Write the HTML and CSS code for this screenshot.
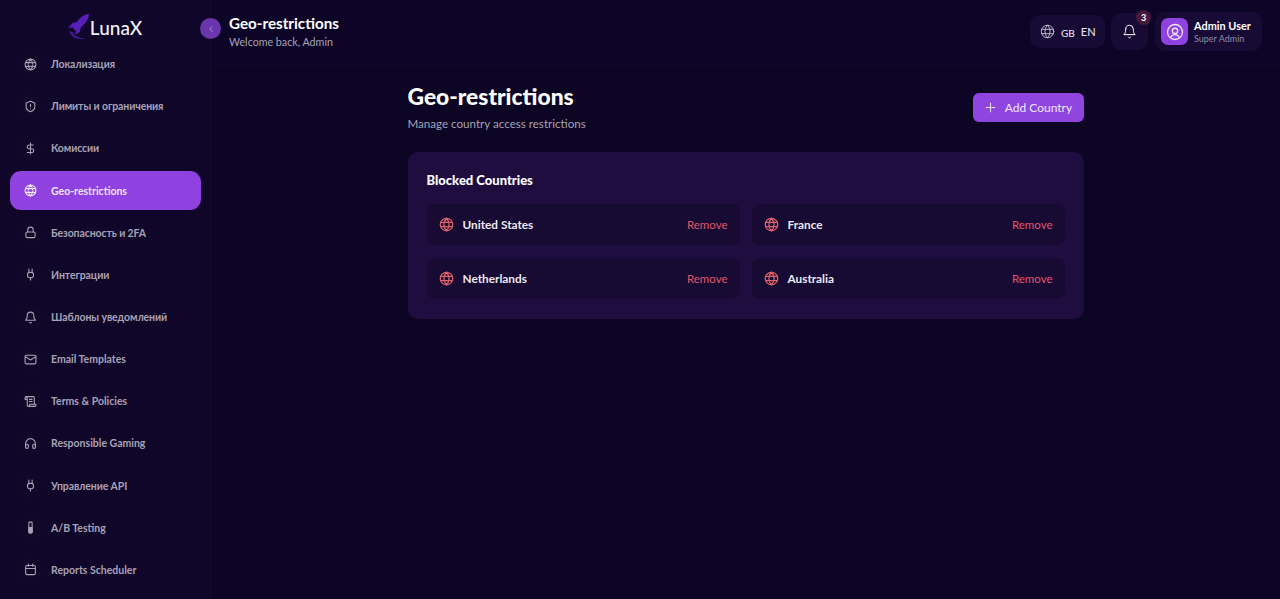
FILE: index.html
```html
<!DOCTYPE html>
<html lang="en">
<head>
  <meta charset="UTF-8" />
  <meta name="viewport" content="width=device-width, initial-scale=1" />
  <title>Geo-restrictions - LunaX</title>
  <link rel="stylesheet" href="styles.css">
</head>
<body>

<svg class="sprite" xmlns="http://www.w3.org/2000/svg">
  <symbol id="i-globe" viewBox="0 0 24 24"><circle cx="12" cy="12" r="10"/><path d="M3 8.500h18M3 15.500h18M12 2c-5.500 6-5.500 14 0 20M12 2c5.500 6 5.500 14 0 20"/></symbol>
  <symbol id="i-shield" viewBox="0 0 24 24"><path d="M12 2.500l8 3v6.500c0 5-3.500 8-8 9.500-4.500-1.500-8-4.500-8-9.500V5.500z"/><path d="M12 8v4.500M12 16v.01"/></symbol>
  <symbol id="i-dollar" viewBox="0 0 24 24"><path d="M12 2v20M17 5.500H9.500a3.500 3.500 0 0 0 0 7h5a3.500 3.500 0 0 1 0 7H6"/></symbol>
  <symbol id="i-lock" viewBox="0 0 24 24"><rect x="3.500" y="11" width="17" height="10.500" rx="2.500"/><path d="M7 11V7a5 5 0 0 1 10 0v4"/></symbol>
  <symbol id="i-plug" viewBox="0 0 24 24"><path d="M9 2v6M15 2v6M12 18v4"/><rect x="6.500" y="8" width="11" height="10" rx="4"/></symbol>
  <symbol id="i-bell" viewBox="0 0 24 24"><path d="M6 8a6 6 0 0 1 12 0c0 7 3 9 3 9H3s3-2 3-9"/><path d="M10.300 21a1.900 1.900 0 0 0 3.400 0"/></symbol>
  <symbol id="i-mail" viewBox="0 0 24 24"><rect x="2" y="4" width="20" height="16" rx="2.500"/><path d="M2.500 7l9.500 6 9.500-6"/></symbol>
  <symbol id="i-scroll" viewBox="0 0 24 24"><path d="M8 21h12a2 2 0 0 0 2-2v-2H10v2a2 2 0 1 1-4 0V5a2 2 0 1 0-4 0v3h4"/><path d="M19 17V5a2 2 0 0 0-2-2H4M15 8h-5M15 12h-5"/></symbol>
  <symbol id="i-headphones" viewBox="0 0 24 24"><path d="M3 18v-6a9 9 0 0 1 18 0v6"/><rect x="3" y="13.500" width="5" height="7.500" rx="2"/><rect x="16" y="13.500" width="5" height="7.500" rx="2"/></symbol>
  <symbol id="i-tube" viewBox="0 0 24 24"><rect x="9" y="2" width="6" height="20" rx="1.500"/><path class="tube-fill" d="M9 12h6v8.500a1.500 1.500 0 0 1-1.500 1.500h-3A1.500 1.500 0 0 1 9 20.500z"/></symbol>
  <symbol id="i-calendar" viewBox="0 0 24 24"><rect x="3" y="4.500" width="18" height="17" rx="2.500"/><path d="M8 2v4M16 2v4M3 10h18"/></symbol>
  <symbol id="i-user" viewBox="0 0 24 24"><circle cx="12" cy="12" r="10"/><circle cx="12" cy="10.500" r="3.500"/><path d="M6.500 19c1-2.500 3-3.500 5.500-3.500s4.500 1 5.500 3.500"/></symbol>
</svg>

<div class="app">
  <aside class="sidebar">
    <div class="logo">
      <svg class="logo-mark" viewBox="0 0 21 28">
        <path class="rocket" d="M21 0c-5 .5-9.500 3.500-12 8l-4.500 1L0 14l4.500-.5 3.500 3.500-.5 4 4.500-3.500 1-4.500C17 10 20.500 6 21 0z"/>
        <path class="swoosh" d="M1 17c1.500 6 9 10 17 7.500-6 0-11-2-13.500-6.500z"/>
      </svg>
      <span>LunaX</span>
    </div>
    <nav class="nav">
      <a class="nav-item ru"><span class="nav-icon"><svg><use href="#i-globe"/></svg></span>Локализация</a>
      <a class="nav-item ru"><span class="nav-icon"><svg><use href="#i-shield"/></svg></span>Лимиты и ограничения</a>
      <a class="nav-item ru"><span class="nav-icon"><svg><use href="#i-dollar"/></svg></span>Комиссии</a>
      <a class="nav-item active"><span class="nav-icon"><svg><use href="#i-globe"/></svg></span>Geo-restrictions</a>
      <a class="nav-item ru"><span class="nav-icon"><svg><use href="#i-lock"/></svg></span>Безопасность и 2FA</a>
      <a class="nav-item ru"><span class="nav-icon"><svg><use href="#i-plug"/></svg></span>Интеграции</a>
      <a class="nav-item ru"><span class="nav-icon"><svg><use href="#i-bell"/></svg></span>Шаблоны уведомлений</a>
      <a class="nav-item"><span class="nav-icon"><svg><use href="#i-mail"/></svg></span>Email Templates</a>
      <a class="nav-item"><span class="nav-icon"><svg><use href="#i-scroll"/></svg></span>Terms &amp; Policies</a>
      <a class="nav-item"><span class="nav-icon"><svg><use href="#i-headphones"/></svg></span>Responsible Gaming</a>
      <a class="nav-item ru"><span class="nav-icon"><svg><use href="#i-plug"/></svg></span>Управление API</a>
      <a class="nav-item"><span class="nav-icon"><svg><use href="#i-tube"/></svg></span>A/B Testing</a>
      <a class="nav-item"><span class="nav-icon"><svg><use href="#i-calendar"/></svg></span>Reports Scheduler</a>
    </nav>
  </aside>

  <div class="main">
    <header class="topbar">
      <button class="collapse">
        <svg viewBox="0 0 24 24"><path d="M15 6l-6 6 6 6"/></svg>
      </button>
      <div class="page-info">
        <div class="page-name">Geo-restrictions</div>
        <div class="page-welcome">Welcome back, Admin</div>
      </div>
      <div class="top-actions">
        <div class="chip lang">
          <svg class="chip-globe"><use href="#i-globe"/></svg>
          <span class="flag">GB</span>
          <span>EN</span>
        </div>
        <div class="chip bell">
          <svg><use href="#i-bell"/></svg>
          <span class="badge">3</span>
        </div>
        <div class="chip user">
          <span class="avatar"><svg><use href="#i-user"/></svg></span>
          <div>
            <div class="user-name">Admin User</div>
            <div class="user-role">Super Admin</div>
          </div>
        </div>
      </div>
    </header>

    <main class="content">
      <div class="content-head">
        <div>
          <h1>Geo-restrictions</h1>
          <p>Manage country access restrictions</p>
        </div>
        <button class="add-btn">
          <svg viewBox="0 0 24 24"><path d="M12 4v16M4 12h16"/></svg>
          Add Country
        </button>
      </div>

      <section class="card">
        <h2>Blocked Countries</h2>
        <div class="country-grid">
          <div class="country"><svg><use href="#i-globe"/></svg><span class="country-name">United States</span><a class="remove">Remove</a></div>
          <div class="country"><svg><use href="#i-globe"/></svg><span class="country-name">France</span><a class="remove">Remove</a></div>
          <div class="country"><svg><use href="#i-globe"/></svg><span class="country-name">Netherlands</span><a class="remove">Remove</a></div>
          <div class="country"><svg><use href="#i-globe"/></svg><span class="country-name">Australia</span><a class="remove">Remove</a></div>
        </div>
      </section>
    </main>
  </div>
</div>

</body>
</html>
```

FILE: styles.css
```css
* {
  box-sizing: border-box;
}

body {
  margin: 0;
  height: 100vh;
  overflow: hidden;
  background: #0c0524;
  color: #fff;
  font-family: Lato, "Noto Sans", sans-serif;
}

.sprite {
  display: none;
}

svg {
  fill: none;
  stroke: currentColor;
  stroke-width: 2;
  stroke-linecap: round;
  stroke-linejoin: round;
}

.tube-fill {
  fill: currentColor;
}

.app {
  display: flex;
  height: 100%;
}

/* sidebar */
.sidebar {
  width: 211px;
  flex-shrink: 0;
  background: #0f0629;
  border-right: 1px solid #130a2e;
  overflow: hidden;
}

.logo {
  height: 45px;
  padding-top: 10px;
  display: flex;
  align-items: center;
  justify-content: center;
  gap: 1px;
  font-size: 19px;
  font-weight: 500;
  color: #f2f0f6;
}

.logo-mark {
  width: 21px;
  height: 28px;
  stroke: none;
}

.rocket {
  fill: #5a1fb8;
}

.swoosh {
  fill: #3f1590;
}

.nav {
  display: flex;
  flex-direction: column;
  gap: 4px;
  padding: 0 9px 0 10px;
}

.nav-item {
  height: 38.170px;
  flex-shrink: 0;
  display: flex;
  align-items: center;
  gap: 9px;
  padding-left: 8px;
  border-radius: 11px;
  font-size: 10.500px;
  font-weight: 700;
  color: #a7a2b6;
}

.nav-item.ru {
  letter-spacing: -0.100px;
}

.nav-item.active {
  background: #8f42e0;
  color: #ece4f8;
}

.nav-icon {
  width: 24px;
  height: 24px;
  display: flex;
  align-items: center;
  justify-content: center;
  border-radius: 8px;
  background: #110829;
}

.active .nav-icon {
  background: none;
  color: #f2ecfb;
}

.nav-icon svg {
  width: 13px;
  height: 13px;
  stroke-width: 2;
}

/* top bar */
.main {
  flex: 1;
  min-width: 0;
}

.topbar {
  height: 66px;
  display: flex;
  align-items: flex-start;
  padding: 18px 18px 0 0;
  background: #0d0527;
  border-bottom: 1px solid #120a2e;
}

.collapse {
  width: 21px;
  height: 21px;
  margin: 0 8px 0 -11px;
  padding: 0;
  display: flex;
  align-items: center;
  justify-content: center;
  border: none;
  border-radius: 50%;
  background: #6a35ad;
  color: #b9a0dc;
}

.collapse svg {
  width: 10px;
  height: 10px;
}

.page-name {
  margin-top: -4px;
  font-size: 15.200px;
  font-weight: 700;
  line-height: 19px;
}

.page-welcome {
  margin-top: 2px;
  font-size: 10.700px;
  line-height: 13px;
  color: #a7a2b6;
}

.top-actions {
  margin: -6px 0 0 auto;
  display: flex;
  align-items: center;
  gap: 6px;
}

.chip {
  position: relative;
  display: flex;
  align-items: center;
  border-radius: 10px;
  background: #170b36;
}

.lang {
  width: 75px;
  height: 33px;
  padding-left: 10px;
  font-size: 11px;
  font-weight: 500;
  color: #e3e0ea;
}

.chip-globe {
  width: 15px;
  height: 15px;
  margin-right: 6px;
  stroke-width: 1.500;
  color: #c6c2d2;
}

.flag {
  margin: 2px 6px 0 0;
  font-size: 10px;
}

.bell {
  width: 37px;
  height: 37px;
  justify-content: center;
}

.bell svg {
  width: 15px;
  height: 15px;
  stroke-width: 1.600;
}

.badge {
  position: absolute;
  top: -3px;
  right: -3px;
  width: 15px;
  height: 15px;
  border-radius: 50%;
  background: #46183e;
  font-size: 9px;
  font-weight: 700;
  line-height: 15px;
  text-align: center;
}

.user {
  width: 107px;
  height: 39px;
  margin-left: 1px;
  padding-left: 6px;
  gap: 6px;
}

.avatar {
  width: 27px;
  height: 27px;
  display: flex;
  align-items: center;
  justify-content: center;
  border-radius: 7px;
  background: #8f42e0;
  color: #ece4f8;
}

.avatar svg {
  width: 18px;
  height: 18px;
  stroke-width: 1.700;
}

.user-name {
  font-size: 10.900px;
  font-weight: 700;
  line-height: 14px;
}

.user-role {
  font-size: 9px;
  line-height: 12px;
  color: #8f8aa3;
}

/* page content */
.content {
  width: 676px;
  margin: 0 auto;
  padding-top: 15px;
}

.content-head {
  display: flex;
  justify-content: space-between;
  align-items: flex-start;
  margin-bottom: 20px;
}

h1 {
  margin: 0;
  font-size: 22.800px;
  font-weight: 900;
  line-height: 30px;
}

.content-head p {
  margin: 5px 0 0;
  font-size: 11.600px;
  line-height: 16px;
  color: #a7a2b6;
}

.add-btn {
  width: 111px;
  height: 29px;
  margin-top: 12px;
  display: flex;
  align-items: center;
  justify-content: center;
  gap: 8px;
  border: none;
  border-radius: 6px;
  background: #9045e0;
  color: #efe6fb;
  font: inherit;
  font-size: 12px;
}

.add-btn svg {
  width: 13px;
  height: 13px;
  stroke-width: 1.800;
}

.card {
  height: 167px;
  padding: 19px 19px 0;
  border-radius: 10px;
  background: #1f0d40;
}

h2 {
  margin: 0 0 15px;
  font-size: 13px;
  font-weight: 900;
  line-height: 18px;
}

.country-grid {
  display: grid;
  grid-template-columns: 1fr 1fr;
  gap: 13px 12px;
}

.country {
  height: 41px;
  display: flex;
  align-items: center;
  gap: 9px;
  padding: 0 12px;
  border-radius: 8px;
  background: #170a33;
}

.country svg {
  width: 15px;
  height: 15px;
  stroke-width: 2;
  color: #e0636a;
}

.country-name {
  font-size: 11.800px;
  font-weight: 700;
  color: #ece9f2;
}

.remove {
  margin-left: auto;
  font-size: 11.500px;
  color: #e0566a;
}
```
